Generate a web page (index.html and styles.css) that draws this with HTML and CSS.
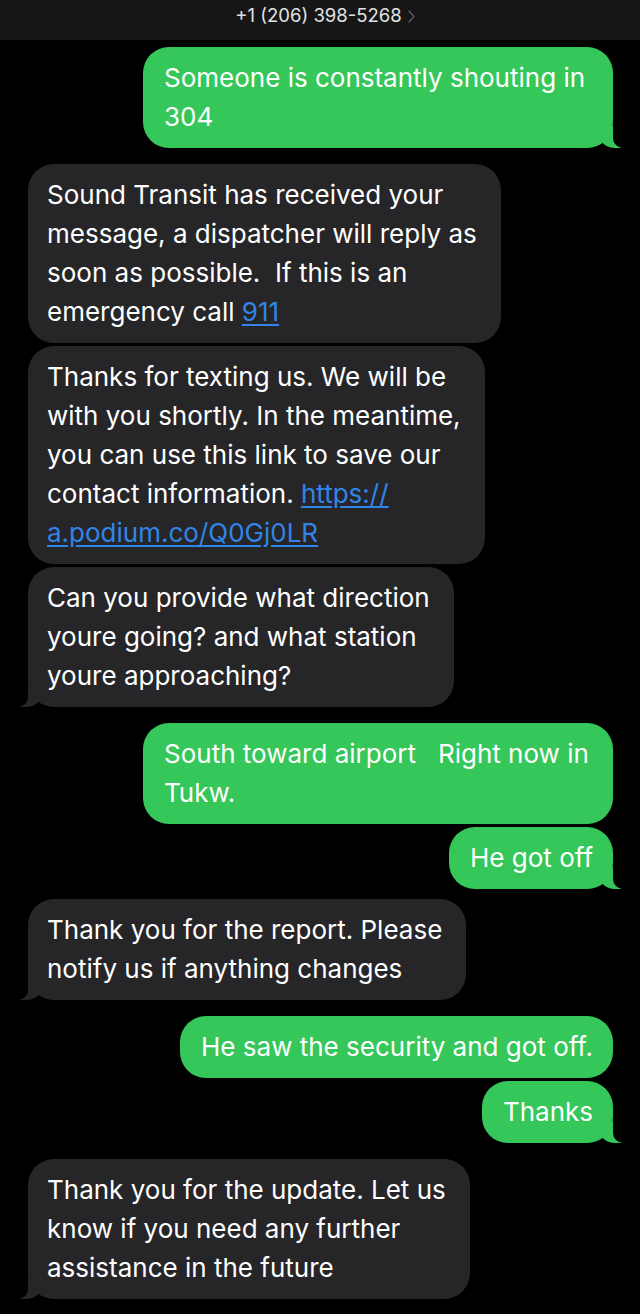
FILE: index.html
```html
<!DOCTYPE html>
<html lang="en">
<head>
  <meta charset="UTF-8">
  <title>Messages</title>
  <link rel="stylesheet" href="styles.css">
</head>
<body>
  <header class="topbar">
    <span class="contact">+1 (206) 398-5268</span>
    <svg class="chev" width="7" height="13" viewBox="0 0 7 13"><path d="M1 1l5 5.5-5 5.5" fill="none" stroke="#5c5c5e" stroke-width="1.4" stroke-linecap="round" stroke-linejoin="round"/></svg>
  </header>

  <main class="thread">
    <!-- me -->
    <div class="msg sent tail full first">Someone is constantly shouting in<br>304</div>

    <!-- them -->
    <div class="msg recv group">Sound Transit has received your<br>message, a dispatcher will reply as<br>soon as possible.&nbsp; If this is an<br>emergency call <a href="#">911</a></div>
    <div class="msg recv">Thanks for texting us. We will be<br>with you shortly. In the meantime,<br>you can use this link to save our<br>contact information. <a href="#">https://<br>a.podium.co/Q0Gj0LR</a></div>
    <div class="msg recv tail">Can you provide what direction<br>youre going? and what station<br>youre approaching?</div>

    <!-- me -->
    <div class="msg sent full group">South toward airport&nbsp;&nbsp; Right now in<br>Tukw.</div>
    <div class="msg sent tail">He got off</div>

    <!-- them -->
    <div class="msg recv tail group-sm">Thank you for the report. Please<br>notify us if anything changes</div>

    <!-- me -->
    <div class="msg sent group">He saw the security and got off.</div>
    <div class="msg sent tail">Thanks</div>

    <!-- them -->
    <div class="msg recv tail group">Thank you for the update. Let us<br>know if you need any further<br>assistance in the future</div>
  </main>
</body>
</html>
```

FILE: styles.css
```css
/* Fondo negro estilo iMessage */
body {
  margin: 0;
  background: #000;
  font-family: Inter, "Noto Sans", sans-serif;
  color: #fff;
}

/* Barra superior con el contacto */
.topbar {
  height: 40px;
  box-sizing: border-box;
  padding-top: 3px;
  background: #161616;
  display: flex;
  justify-content: center;
  align-items: flex-start;
  gap: 6px;
}
.contact {
  font-size: 18.5px;
  line-height: 25px;
  color: #e2e2e2;
  margin-left: 10px;
}
.chev {
  margin-top: 7px;
}

/* Hilo de mensajes */
.thread {
  display: flex;
  flex-direction: column;
  padding: 7px 27px 0 28px;
}
.msg {
  position: relative;
  box-sizing: border-box;
  padding: 11px 24px 12px 19px;
  font-size: 26px;
  line-height: 39px;
  border-radius: 26px;
  margin-top: 3px;
}
.msg.first {
  margin-top: 0;
}
.msg.group {
  margin-top: 16px;
}
.msg.group-sm {
  margin-top: 10px;
}
.sent {
  align-self: flex-end;
  background: #35c759;
  padding-left: 21px;
  padding-right: 20px;
}
.sent.full {
  width: 470px;
}
.recv {
  align-self: flex-start;
  background: #262628;
}
.recv a {
  color: #3185e8;
  text-decoration: underline;
  text-underline-offset: 3px;
}

/* Colitas de las burbujas */
.tail::before,
.tail::after {
  content: "";
  position: absolute;
  bottom: 0;
  height: 22px;
}
.sent.tail::before {
  right: -8px;
  width: 22px;
  background: #35c759;
  border-bottom-left-radius: 16px 14px;
}
.sent.tail::after {
  right: -26px;
  width: 26px;
  background: #000;
  border-bottom-left-radius: 10px;
}
.recv.tail::before {
  left: -8px;
  width: 22px;
  background: #262628;
  border-bottom-right-radius: 16px 14px;
}
.recv.tail::after {
  left: -26px;
  width: 26px;
  background: #000;
  border-bottom-right-radius: 10px;
}
```
